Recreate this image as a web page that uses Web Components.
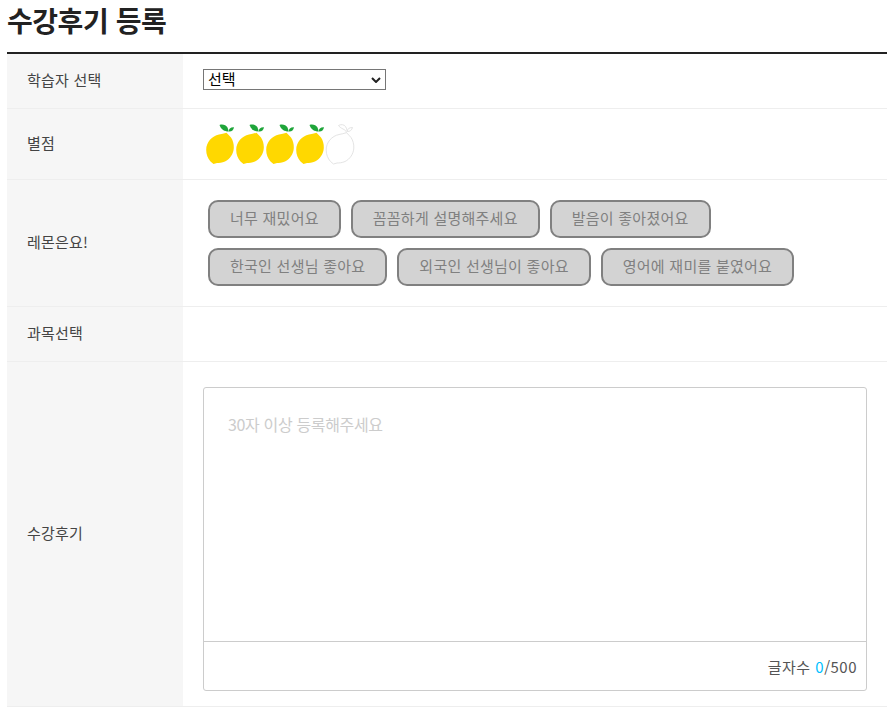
<!DOCTYPE html>
<html lang="ko">
<head>
<meta charset="utf-8">
<title>수강후기 등록</title>
<style>
  html, body { margin: 0; background: #fff; }
  body { padding: 0 7px; font-family: "Noto Sans CJK KR", "Noto Sans", sans-serif; color: #222; }
</style>
</head>
<body>
<review-page>
  <form-row label="학습자 선택" pad="15px 20px 18px"><learner-select>선택</learner-select></form-row>
  <form-row label="별점" pad="14px 20px 14px 22px"><lemon-rating score="4"></lemon-rating></form-row>
  <form-row label="레몬은요!" pad="20px 20px 20px 25px">
    <tag-list>
      <tag-button>너무 재밌어요</tag-button>
      <tag-button>꼼꼼하게 설명해주세요</tag-button>
      <tag-button>발음이 좋아졌어요</tag-button>
      <tag-button>한국인 선생님 좋아요</tag-button>
      <tag-button>외국인 선생님이 좋아요</tag-button>
      <tag-button>영어에 재미를 붙였어요</tag-button>
    </tag-list>
  </form-row>
  <form-row label="과목선택" pad="0 20px" min="54"></form-row>
  <form-row label="수강후기" pad="25px 20px 15px"><review-box></review-box></form-row>
</review-page>

<script>
class ReviewPage extends HTMLElement {
  constructor() {
    super();
    this.attachShadow({ mode: 'open' });
    this.shadowRoot.innerHTML = /* html */ `
    <style>
      :host { display: block; }
      h2 {
        margin: 0;
        height: 52px;
        font-size: 28px;
        line-height: 41px;
        font-weight: 700;
        letter-spacing: -0.45px;
        color: #222;
      }
      .table { border-top: 2px solid #222; }
    </style>
    <h2>수강후기 등록</h2>
    <div class="table"><slot></slot></div>`;
  }
}

class FormRow extends HTMLElement {
  constructor() {
    super();
    this.attachShadow({ mode: 'open' });
    const pad = this.getAttribute('pad') || '0 20px';
    const min = this.getAttribute('min') || '0';
    this.shadowRoot.innerHTML = /* html */ `
    <style>
      :host { display: flex; border-bottom: 1px solid #eee; min-height: ${min}px; }
      .label {
        flex: 0 0 136px;
        padding: 0 20px 3px;
        display: flex;
        align-items: center;
        background: #f6f6f6;
        font-size: 15px;
        font-weight: 400;
        letter-spacing: 0.2px;
        color: #444;
      }
      .body { flex: 1; min-width: 0; padding: ${pad}; }
    </style>
    <div class="label">${this.getAttribute('label')}</div>
    <div class="body"><slot></slot></div>`;
  }
}

// native select clips the text at this height, so the box is drawn by hand
class LearnerSelect extends HTMLElement {
  constructor() {
    super();
    this.attachShadow({ mode: 'open' });
    this.shadowRoot.innerHTML = /* html */ `
    <style>
      :host {
        display: flex;
        align-items: center;
        justify-content: space-between;
        box-sizing: border-box;
        width: 183px;
        height: 21px;
        padding: 0 4px 2px 4px;
        font-size: 15px;
        line-height: 18px;
        color: #000;
        background: #fff;
        border: 1px solid #767676;
      }
      svg { display: block; width: 10px; height: 6px; margin: 2px 0 0; }
    </style>
    <slot></slot>
    <svg viewBox="0 0 10 6"><path d="M1 1 L5 5 L9 1" fill="none" stroke="#222" stroke-width="2"/></svg>`;
  }
}

class LemonRating extends HTMLElement {
  constructor() {
    super();
    this.attachShadow({ mode: 'open' });
    const score = Number(this.getAttribute('score'));
    let icons = '';
    for (let i = 0; i < 5; i++) {
      icons += i < score ? LemonRating.full : LemonRating.empty;
    }
    this.shadowRoot.innerHTML = /* html */ `
    <style>
      :host { display: flex; gap: 0; height: 42px; }
      svg { display: block; width: 30px; height: 42px; flex: none; }
    </style>
    ${icons}`;
  }

  static get body() {
    return 'M21.500 9.700 C23 11.500 25 13 26 14.500 C28 17.500 29 21 28.800 25 C28.500 31 25 36 20 38.500 C17 39.800 14 40 12 40 L8.500 41 L5.500 38.500 C2.800 35.500 1.200 31.500 1.200 27 C1.200 19 7 13 14 11.500 C16.500 11 19 10.500 21.500 9.700 Z';
  }

  static get full() {
    return /* html */ `
    <svg viewBox="0 0 30 42">
      <path d="${LemonRating.body}" fill="#ffd800"/>
      <path d="M14.500 2 C17.500 0.800 21 2 22.500 4.500 C23 5.500 23.300 7 23.500 8.500 C19.500 8.500 16 6.500 14.500 2 Z" fill="#1fa53a"/>
      <path d="M23.500 8.500 C23.500 6 25.500 4 29 4.200 C28.500 7 26.500 9 23.500 8.500 Z" fill="#1fa53a"/>
    </svg>`;
  }

  static get empty() {
    return /* html */ `
    <svg viewBox="0 0 30 42" fill="none" stroke="#e4e4e4" stroke-width="1">
      <path d="${LemonRating.body}"/>
      <path d="M21.500 9.700 C21 7.500 20 7 18 6 C16 5 14 3.500 13.500 2.500 C16 1 19 1.500 20.500 3.500 C21.500 5 22 6.500 22.300 8.500 C22.300 6 24 4.500 27.500 4.500 C27 6.800 25 8.800 22.300 8.500"/>
    </svg>`;
  }
}

class TagList extends HTMLElement {
  constructor() {
    super();
    this.attachShadow({ mode: 'open' });
    this.shadowRoot.innerHTML = /* html */ `
    <style>
      :host { display: flex; flex-wrap: wrap; gap: 10px 10px; }
    </style>
    <slot></slot>`;
  }
}

class TagButton extends HTMLElement {
  constructor() {
    super();
    this.attachShadow({ mode: 'open' });
    this.shadowRoot.innerHTML = /* html */ `
    <style>
      :host {
        display: block;
        box-sizing: border-box;
        height: 38px;
        padding: 0 20px;
        border: 2px solid #808080;
        border-radius: 10px;
        background: #d3d3d3;
        color: #808080;
        font-size: 15px;
        letter-spacing: 0.25px;
        line-height: 31px;
        white-space: nowrap;
      }
    </style>
    <slot></slot>`;
  }
}

class ReviewBox extends HTMLElement {
  constructor() {
    super();
    this.attachShadow({ mode: 'open' });
    this.shadowRoot.innerHTML = /* html */ `
    <style>
      :host {
        display: block;
        box-sizing: border-box;
        height: 304px;
        border: 1px solid #ccc;
        border-radius: 3px;
      }
      .text {
        box-sizing: border-box;
        height: 254px;
        padding: 23px 24px 0;
        font-size: 16px;
        letter-spacing: -0.35px;
        line-height: 26px;
        color: #ccc;
        border-bottom: 1px solid #ccc;
      }
      .count {
        height: 48px;
        padding: 0 9px;
        display: flex;
        justify-content: flex-end;
        align-items: center;
        font-size: 15px;
        letter-spacing: 0.5px;
        color: #555;
        white-space: pre;
      }
      .now { color: #00bfff; }
    </style>
    <div class="text">30자 이상 등록해주세요</div>
    <div class="count">글자수 <span class="now">0</span>/500</div>`;
  }
}

customElements.define('review-page', ReviewPage);
customElements.define('form-row', FormRow);
customElements.define('learner-select', LearnerSelect);
customElements.define('lemon-rating', LemonRating);
customElements.define('tag-list', TagList);
customElements.define('tag-button', TagButton);
customElements.define('review-box', ReviewBox);
</script>
</body>
</html>
